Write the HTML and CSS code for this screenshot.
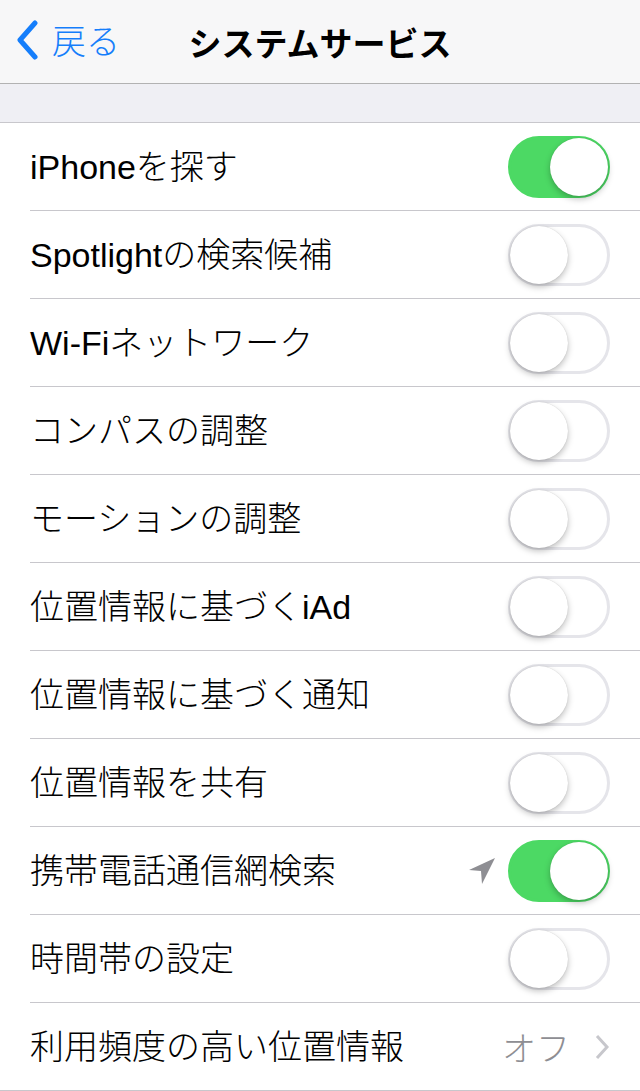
FILE: index.html
```html
<!DOCTYPE html>
<html lang="ja">
<head>
<meta charset="utf-8">
<link rel="stylesheet" href="styles.css">
</head>
<body>
<header class="nav">
  <a class="back">
    <svg class="back-chevron" width="22" height="40" viewBox="0 0 22 40"><path d="M19 3 L4 20 L19 37" fill="none" stroke="#157efb" stroke-width="5" stroke-linecap="round" stroke-linejoin="round"/></svg>
    <span>戻る</span>
  </a>
  <h1 class="title">システムサービス</h1>
</header>
<div class="gap"></div>
<ul class="list">
  <li class="row"><span class="label">iPhoneを探す</span><span class="switch on"></span></li>
  <li class="row"><span class="label">Spotlightの検索候補</span><span class="switch"></span></li>
  <li class="row"><span class="label">Wi-Fiネットワーク</span><span class="switch"></span></li>
  <li class="row"><span class="label">コンパスの調整</span><span class="switch"></span></li>
  <li class="row"><span class="label">モーションの調整</span><span class="switch"></span></li>
  <li class="row"><span class="label">位置情報に基づくiAd</span><span class="switch"></span></li>
  <li class="row"><span class="label">位置情報に基づく通知</span><span class="switch"></span></li>
  <li class="row"><span class="label">位置情報を共有</span><span class="switch"></span></li>
  <li class="row"><span class="label">携帯電話通信網検索</span>
    <svg class="loc" width="28" height="28" viewBox="0 0 28 28"><path d="M27 1 L1 13 L13 14 L14 27 Z" fill="#8e8e93"/></svg>
    <span class="switch on"></span></li>
  <li class="row"><span class="label">時間帯の設定</span><span class="switch"></span></li>
  <li class="row"><span class="label">利用頻度の高い位置情報</span><span class="value">オフ</span>
    <svg class="disclosure" width="16" height="26" viewBox="0 0 16 26"><path d="M3 2 L13 13 L3 24" fill="none" stroke="#c7c7cc" stroke-width="3"/></svg></li>
</ul>
</body>
</html>
```

FILE: styles.css
```css
* { box-sizing: border-box; }
html, body { margin: 0; padding: 0; }
body {
  width: 640px;
  background: #efeff4;
  font-family: "Noto Sans CJK JP", "Noto Sans", sans-serif;
  color: #000;
}
.nav {
  height: 84px;
  background: #f7f7f8;
  border-bottom: 1px solid #b2b2b2;
  position: relative;
  display: flex;
  align-items: center;
  justify-content: center;
}
.back {
  position: absolute;
  left: 16px;
  top: 18px;
  display: flex;
  align-items: center;
  gap: 14px;
  color: #157efb;
  font-size: 34px;
  font-weight: 300;
}
.back span { line-height: 44px; }
.title {
  margin: 0;
  font-size: 33px;
  font-weight: 700;
  line-height: 44px;
}
.gap { height: 38px; }
.list {
  list-style: none;
  margin: 0;
  padding: 0;
  background: #fff;
  border-top: 1px solid #c8c7cc;
}
.row {
  height: 88px;
  margin-left: 30px;
  padding-right: 30px;
  display: flex;
  align-items: center;
  border-bottom: 1px solid #c8c7cc;
}
.row:last-child { margin-left: 0; padding-left: 30px; }
.label {
  flex: 1;
  font-size: 34px;
  font-weight: 300;
  line-height: 44px;
  font-family: "Liberation Sans", "Noto Sans CJK JP", sans-serif;
}
.switch {
  position: relative;
  width: 102px;
  height: 62px;
  border-radius: 31px;
  border: 3px solid #e5e5ea;
  background: #fff;
}
.switch::after {
  content: "";
  position: absolute;
  top: -1px;
  left: -1px;
  width: 58px;
  height: 58px;
  border-radius: 50%;
  background: #fff;
  box-shadow: 0 3px 6px rgba(0,0,0,0.25), 0 0 1px rgba(0,0,0,0.2);
}
.switch.on {
  background: #4cd964;
  border-color: #4cd964;
}
.switch.on::after { left: auto; right: -1px; }
.loc { margin-right: 12px; }
.value {
  color: #8e8e93;
  font-size: 34px;
  font-weight: 300;
  margin-right: 24px;
}
.disclosure { margin-right: 0; }
```
